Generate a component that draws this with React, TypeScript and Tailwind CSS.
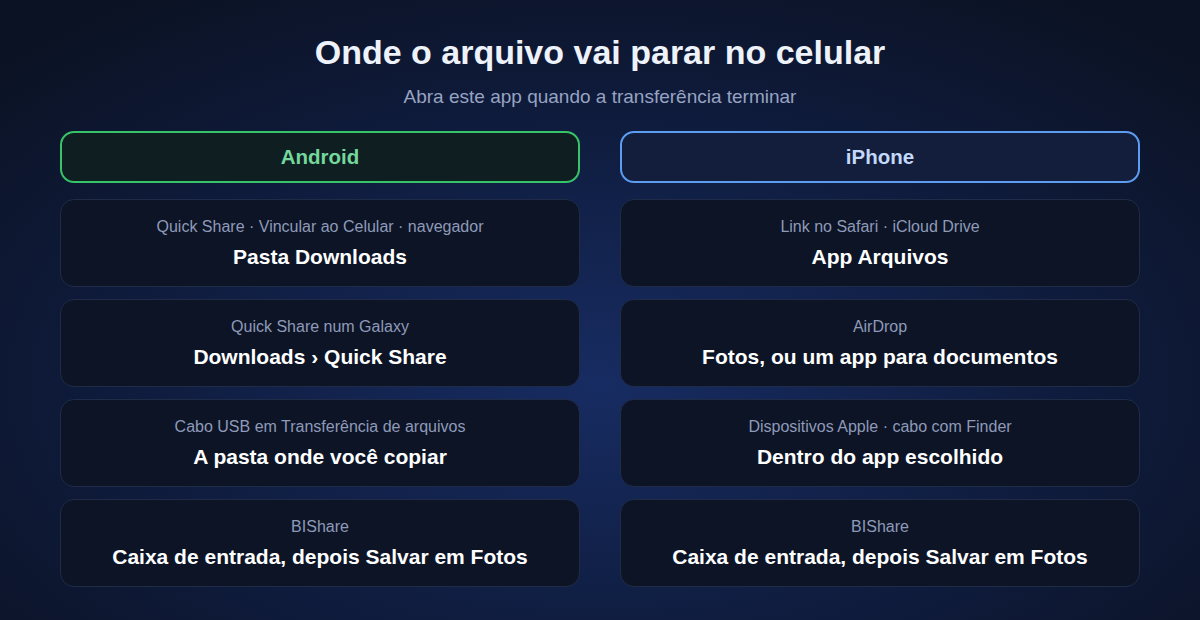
const android = [
  { via: "Quick Share · Vincular ao Celular · navegador", dest: "Pasta Downloads" },
  { via: "Quick Share num Galaxy", dest: "Downloads › Quick Share" },
  { via: "Cabo USB em Transferência de arquivos", dest: "A pasta onde você copiar" },
  { via: "BIShare", dest: "Caixa de entrada, depois Salvar em Fotos" },
];

const iphone = [
  { via: "Link no Safari · iCloud Drive", dest: "App Arquivos" },
  { via: "AirDrop", dest: "Fotos, ou um app para documentos" },
  { via: "Dispositivos Apple · cabo com Finder", dest: "Dentro do app escolhido" },
  { via: "BIShare", dest: "Caixa de entrada, depois Salvar em Fotos" },
];

function Card({ via, dest }: { via: string; dest: string }) {
  return (
    <div className="h-[88px] rounded-[14px] border border-[#1f2b47] bg-[#0c1426] flex flex-col items-center justify-center gap-[8px] pb-[1px]">
      <p className="text-[16px] leading-[19px] text-[#8f9ab8]">{via}</p>
      <p className="text-[21px] leading-[25px] font-bold text-white">{dest}</p>
    </div>
  );
}

export default function App() {
  return (
    <div
      className="w-[1200px] h-[620px] overflow-hidden text-center bg-[radial-gradient(ellipse_70%_75%_at_50%_62%,#172c62_0%,#0f1c3e_55%,#0b1223_100%)]"
      style={{ fontFamily: '"Liberation Sans", Arial, sans-serif' }}
    >
      <div className="pt-[31px] px-[60px]">
        <h1 className="text-[34px] leading-[42px] font-bold text-[#eef2fb]">Onde o arquivo vai parar no celular</h1>
        <p className="mt-[13px] text-[19px] leading-[22px] text-[#97a3c2]">Abra este app quando a transferência terminar</p>

        <div className="mt-[23px] grid grid-cols-2 gap-x-[40px]">
          <div className="flex flex-col gap-[12px]">
            <div className="h-[52px] mb-[4px] rounded-[14px] border-2 border-[#37c468] bg-[#0f1e21] flex items-center justify-center">
              <span className="text-[20.5px] font-bold text-[#74d79b]">Android</span>
            </div>
            {android.map((r, i) => (
              <Card key={i} {...r} />
            ))}
          </div>
          <div className="flex flex-col gap-[12px]">
            <div className="h-[52px] mb-[4px] rounded-[14px] border-2 border-[#5c9df2] bg-[#121e3b] flex items-center justify-center">
              <span className="text-[20.5px] font-bold text-[#c3d8fa]">iPhone</span>
            </div>
            {iphone.map((r, i) => (
              <Card key={i} {...r} />
            ))}
          </div>
        </div>
      </div>
    </div>
  );
}
